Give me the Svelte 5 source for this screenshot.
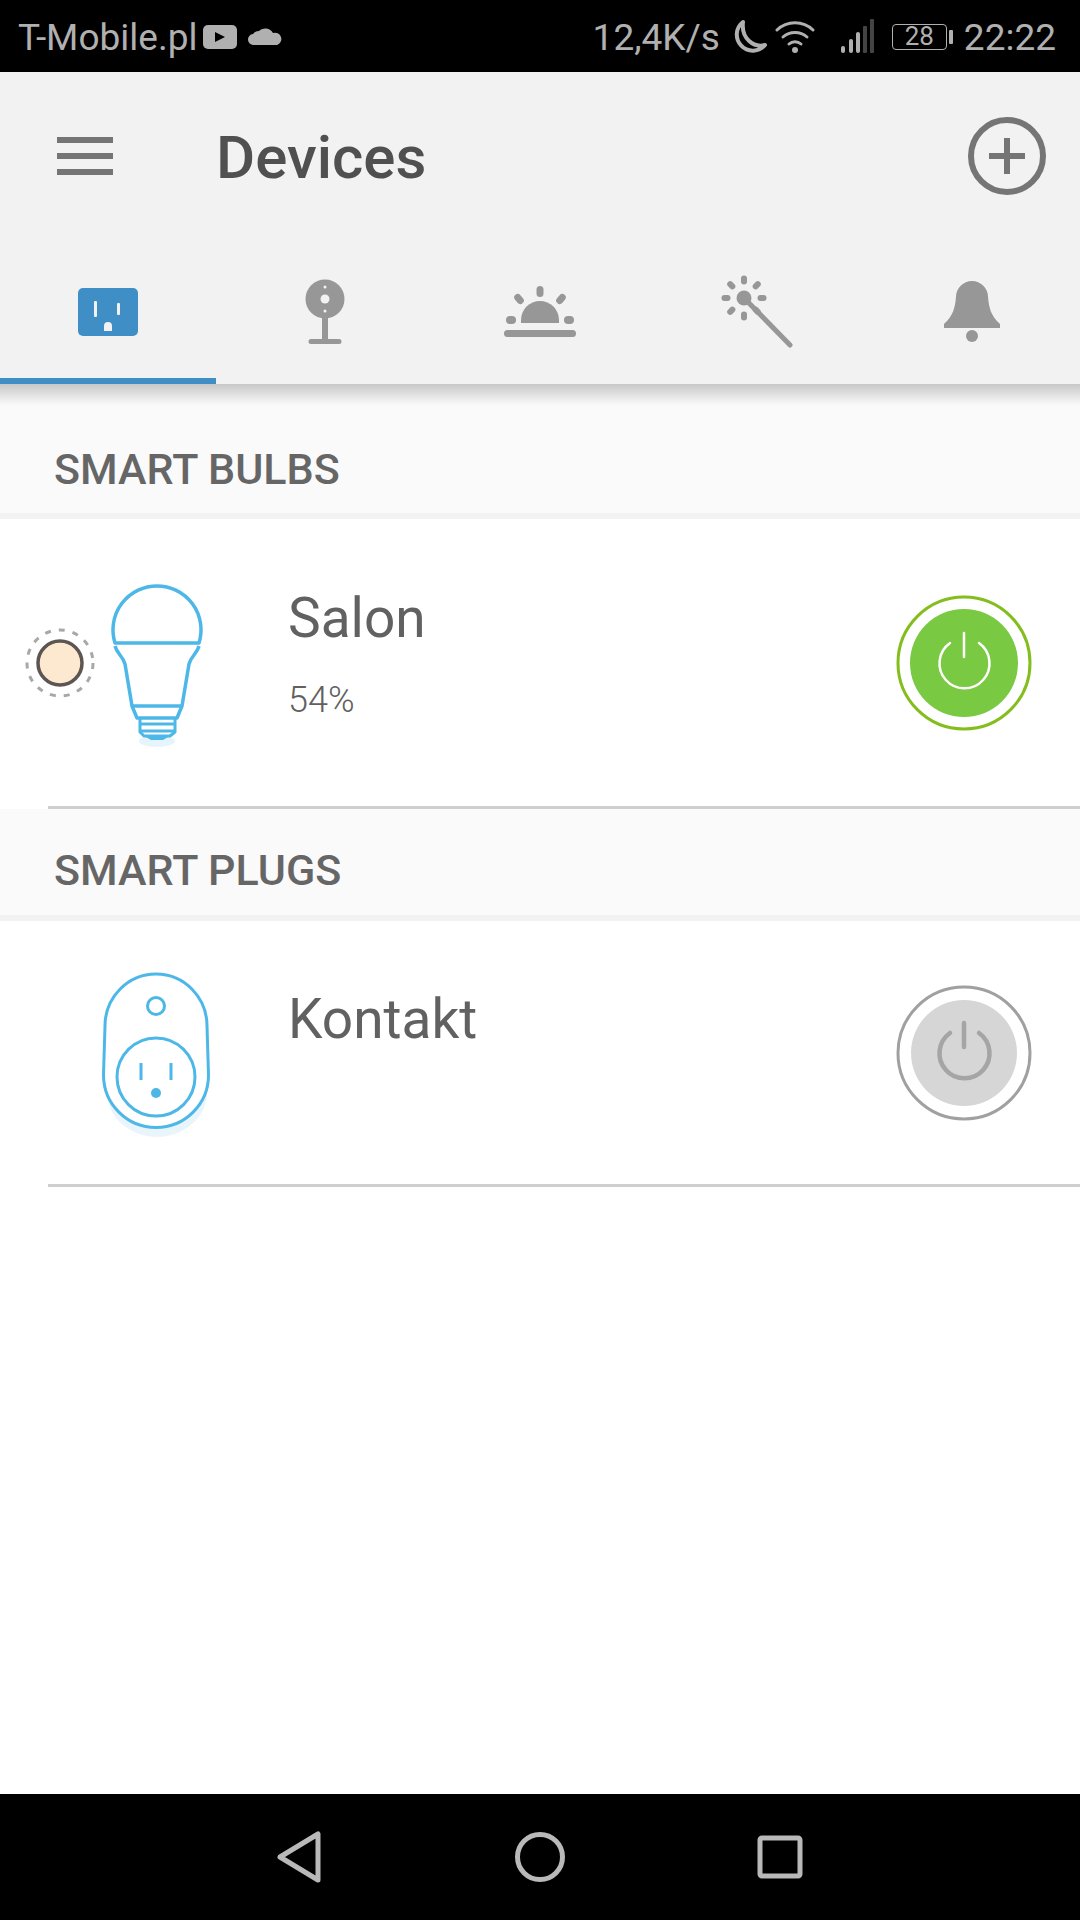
<script lang="ts">
  const tabs = ['plug', 'camera', 'sunrise', 'wand', 'bell'];
  const rays = [0, 45, 90, 135, 180, 225, 270, 315];
</script>

<div class="screen">
  <div class="status">
    <span class="carrier">T-Mobile.pl</span>
    <svg class="yt" viewBox="0 0 34 24" width="34" height="24">
      <rect width="34" height="24" rx="5" fill="#b0b0b0" />
      <path d="M12 7l10 5-10 5z" fill="#000" />
    </svg>
    <svg class="cloud" viewBox="0 0 34 20" width="34" height="20">
      <path d="M6 20a5.500 5.500 0 0 1-1-11 7 7 0 0 1 6-3 9 9 0 0 1 14 2 6 6 0 0 1 4 12z" fill="#b0b0b0" />
    </svg>
    <span class="spacer"></span>
    <span class="speed">12,4K/s</span>
    <svg class="moon" viewBox="0 0 36 36" width="36" height="36">
      <path d="M12 3a16 16 0 1 0 22 23c-11 3-24-6-22-23z" fill="none" stroke="#b0b0b0" stroke-width="4" stroke-linejoin="round" />
    </svg>
    <svg class="wifi" viewBox="0 0 40 36" width="40" height="36" fill="none" stroke="#b0b0b0" stroke-width="3" stroke-linecap="round">
      <path d="M2 11a26 26 0 0 1 36 0" />
      <path d="M8 18a18 18 0 0 1 24 0" />
      <path d="M14 25a9 9 0 0 1 12 0" />
      <circle cx="20" cy="31" r="3" fill="#b0b0b0" stroke="none" />
    </svg>
    <svg class="signal" viewBox="0 0 34 36" width="34" height="36">
      <rect x="0" y="27" width="4" height="7" rx="2" fill="#b0b0b0" />
      <rect x="8" y="20" width="4" height="14" rx="2" fill="#b0b0b0" />
      <rect x="15" y="13" width="4" height="21" rx="2" fill="#b0b0b0" />
      <rect x="22" y="7" width="4" height="27" rx="1" fill="#444" />
      <rect x="29" y="0" width="4" height="34" rx="1" fill="#444" />
    </svg>
    <span class="battery">28</span>
    <span class="nub"></span>
    <span class="clock">22:22</span>
  </div>

  <header class="top">
    <div class="toolbar">
      <div class="burger"><span></span><span></span><span></span></div>
      <h1>Devices</h1>
      <svg class="add" viewBox="0 0 80 80" width="80" height="80" fill="none" stroke="#757575" stroke-width="6">
        <circle cx="40" cy="40" r="36" />
        <path d="M22 40h36M40 22v36" />
      </svg>
    </div>
    <div class="tabs">
      {#each tabs as tab, i}
        <div class="tab" class:active={i === 0}>
          <svg viewBox="-40 270 80 80" width="80" height="80" fill="#979797">
            {#if tab === 'plug'}
              <rect x="-30" y="288" width="60" height="48" rx="5" fill="#3f8fc6" />
              <rect x="-14" y="301" width="3" height="16" rx="1" fill="#f2f2f2" />
              <rect x="9" y="303" width="3" height="12" rx="1" fill="#f2f2f2" />
              <path d="M-4 331v-5a4 4 0 0 1 8 0v5z" fill="#f2f2f2" />
            {:else if tab === 'camera'}
              <ellipse cx="1" cy="299" rx="19.500" ry="19.500" />
              <rect x="-2" y="316" width="6" height="25" />
              <rect x="-15.500" y="339" width="33" height="5" rx="2.500" />
              <circle cx="1" cy="299" r="4.500" fill="#f2f2f2" />
              <circle cx="1" cy="287" r="1.500" fill="#f2f2f2" />
              <circle cx="1" cy="311" r="1.500" fill="#f2f2f2" />
            {:else if tab === 'sunrise'}
              <path d="M-19 323v-3a19 19 0 0 1 38 0v3z" />
              <rect x="-36" y="330" width="72" height="7" rx="3.500" />
              <rect x="-34" y="316" width="10" height="8" rx="4" />
              <rect x="24" y="316" width="10" height="8" rx="4" />
              <rect x="-3.500" y="286" width="7" height="11" rx="3.500" />
              <rect x="-24.500" y="293.500" width="7" height="11" rx="3.500" transform="rotate(-40 -21 299)" />
              <rect x="17.500" y="293.500" width="7" height="11" rx="3.500" transform="rotate(40 21 299)" />
            {:else if tab === 'wand'}
              <circle cx="-12" cy="298" r="7.500" />
              <path d="M-12 298l46 47" stroke="#979797" stroke-width="5" stroke-linecap="round" />
              {#each rays as r}
                <rect x="-15" y="275.500" width="6" height="9" rx="3" transform="rotate({r} -12 298)" />
              {/each}
            {:else}
              <path d="M-28 328v-4c9-8 11-16 12-27a16 16 0 0 1 32 0c1 11 3 19 12 27v4z" />
              <circle cx="0" cy="336" r="6" />
            {/if}
          </svg>
        </div>
      {/each}
    </div>
  </header>
  <div class="shade"></div>

  <div class="section first">SMART BULBS</div>
  <div class="strip"></div>
  <div class="row bulb-row">
    <svg class="thumb" viewBox="0 519 288 287" width="288" height="287">
      <circle cx="60" cy="663" r="33" fill="none" stroke="#a8a8a8" stroke-width="3" stroke-dasharray="6 8" />
      <circle cx="60" cy="663" r="22" fill="#fde9cf" stroke="#5c5552" stroke-width="3.500" />
      <ellipse cx="157" cy="741" rx="18" ry="6" fill="#e6f4fb" />
      <g fill="none" stroke="#4db8e8" stroke-width="3.500" stroke-linejoin="round">
        <path d="M115 643a44 44 0 1 1 84 0z" />
        <path d="M115 646c2 8 8 10 10 18l7 42l5 12h40l5-12l7-42c2-8 8-10 10-18" />
        <path d="M132 706h50" />
      </g>
      <g fill="none" stroke="#4db8e8" stroke-width="3" stroke-linejoin="round">
        <path d="M140 718v14l4 4h26l5-4v-14" />
        <path d="M140 724h35M140 731h35" />
      </g>
      <path d="M146 737h22l-5 3h-12z" fill="#4db8e8" />
    </svg>
    <div class="info">
      <div class="name">Salon</div>
      <div class="level">54%</div>
    </div>
    <svg class="power" viewBox="0 0 140 140" width="140" height="140">
      <circle cx="70" cy="70" r="66" fill="none" stroke="#84bd1e" stroke-width="3" />
      <circle cx="70" cy="70" r="54" fill="#7ac943" />
      <path d="M56 50a25 25 0 1 0 29 0M70 40v24" fill="none" stroke="#fff" stroke-width="2.500" stroke-linecap="round" />
    </svg>
  </div>
  <div class="divider"></div>

  <div class="section">SMART PLUGS</div>
  <div class="strip"></div>
  <div class="row plug-row">
    <svg class="thumb" viewBox="0 921 288 263" width="288" height="263">
      <ellipse cx="157" cy="1092" rx="50" ry="45" fill="#eaf5fb" />
      <path d="M105 1026a51 52 0 0 1 102 0l1.500 49a52 52 0 0 1-105 0z" fill="#fff" stroke="#4db8e8" stroke-width="3" />
      <g fill="none" stroke="#4db8e8" stroke-width="3">
        <circle cx="156" cy="1006" r="8.500" />
        <circle cx="156" cy="1077" r="39" />
        <path d="M141 1063v17M171 1063v17" />
      </g>
      <circle cx="156" cy="1093" r="5" fill="#4db8e8" />
    </svg>
    <div class="info">
      <div class="name">Kontakt</div>
    </div>
    <svg class="power" viewBox="0 0 140 140" width="140" height="140">
      <circle cx="70" cy="70" r="66" fill="none" stroke="#a0a0a0" stroke-width="3" />
      <circle cx="70" cy="70" r="53" fill="#d6d6d6" />
      <path d="M56 50a25 25 0 1 0 29 0M70 40v24" fill="none" stroke="#a5a5a5" stroke-width="4.500" stroke-linecap="round" />
    </svg>
  </div>
  <div class="divider"></div>

  <div class="spacer"></div>

  <nav class="nav">
    <div class="nav-cell">
      <svg viewBox="0 0 48 54" width="48" height="54">
        <path d="M4 27L42 4v46z" fill="none" stroke="#b9b9b9" stroke-width="5" stroke-linejoin="round" />
      </svg>
    </div>
    <div class="nav-cell">
      <svg viewBox="0 0 54 54" width="54" height="54">
        <circle cx="27" cy="27" r="22.500" fill="none" stroke="#b9b9b9" stroke-width="5" />
      </svg>
    </div>
    <div class="nav-cell">
      <svg viewBox="0 0 48 48" width="48" height="48">
        <rect x="4" y="5" width="40" height="38" rx="2" fill="none" stroke="#b9b9b9" stroke-width="5" />
      </svg>
    </div>
  </nav>
</div>

<style>
  :global(body) {
    margin: 0;
    background: #fff;
  }

  .screen {
    display: flex;
    flex-direction: column;
    width: 1080px;
    height: 1920px;
    overflow: hidden;
    font-family: Roboto, sans-serif;
  }

  .spacer {
    flex: 1;
  }

  /* Status bar */
  .status {
    display: flex;
    align-items: center;
    height: 72px;
    padding: 2px 24px 0 18px;
    box-sizing: border-box;
    background: #000;
    color: #b0b0b0;
    font-size: 37px;
  }

  .yt {
    margin-left: 6px;
  }

  .cloud {
    margin: 0 0 4px 11px;
  }

  .moon {
    margin-left: 11px;
  }

  .wifi {
    margin-left: 8px;
  }

  .signal {
    margin-left: 26px;
  }

  .battery {
    width: 55px;
    height: 26px;
    margin-left: 17px;
    box-sizing: border-box;
    border: 1.500px solid #b0b0b0;
    border-radius: 4px;
    font-size: 26px;
    line-height: 23px;
    text-align: center;
  }

  .nub {
    width: 4px;
    height: 14px;
    margin-left: 2px;
    border-radius: 1px;
    background: #b0b0b0;
  }

  .clock {
    margin-left: 11px;
  }

  /* App bar */
  .top {
    background: #f2f2f2;
  }

  .toolbar {
    display: flex;
    align-items: center;
    height: 198px;
    padding: 0 33px 30px 57px;
    box-sizing: border-box;
  }

  .burger {
    display: flex;
    flex-direction: column;
    gap: 10px;
    width: 56px;
  }

  .burger span {
    height: 6px;
    background: #757575;
  }

  h1 {
    flex: 1;
    margin: 2px 0 0 103px;
    color: #505050;
    font-size: 60px;
    font-weight: 500;
  }

  .tabs {
    display: flex;
  }

  .tab {
    display: flex;
    justify-content: center;
    flex: 1;
    height: 114px;
    box-sizing: border-box;
  }

  .tab.active {
    border-bottom: 6px solid #3f8fc6;
  }

  .shade {
    height: 21px;
    background: linear-gradient(#c8c8c8, #fafafa);
  }

  /* Sections */
  .section {
    height: 106px;
    padding-left: 54px;
    background: #fafafa;
    color: #666;
    font-size: 43px;
    font-weight: 500;
    line-height: 122px;
  }

  .section.first {
    height: 108px;
    line-height: 128px;
  }

  .strip {
    height: 6px;
    background: #f2f2f2;
  }

  .row {
    display: flex;
    align-items: flex-start;
    background: #fff;
  }

  .bulb-row {
    height: 287px;
  }

  .plug-row {
    height: 263px;
  }

  .thumb {
    flex: none;
    display: block;
  }

  .info {
    flex: 1;
    padding-top: 67px;
    color: #616161;
  }

  .plug-row .info {
    padding-top: 66px;
  }

  .name {
    font-size: 55px;
    line-height: 64px;
  }

  .level {
    margin-top: 30px;
    font-size: 36px;
    font-weight: 300;
    line-height: 40px;
  }

  .power {
    flex: none;
    margin: 74px 46px 0 0;
  }

  .plug-row .power {
    margin-top: 62px;
  }

  .divider {
    height: 3px;
    margin-left: 48px;
    background: #cfcfcf;
  }

  /* Navigation bar */
  .nav {
    display: flex;
    justify-content: center;
    align-items: center;
    height: 126px;
    background: #000;
  }

  .nav-cell {
    display: flex;
    justify-content: center;
    width: 240px;
  }
</style>
